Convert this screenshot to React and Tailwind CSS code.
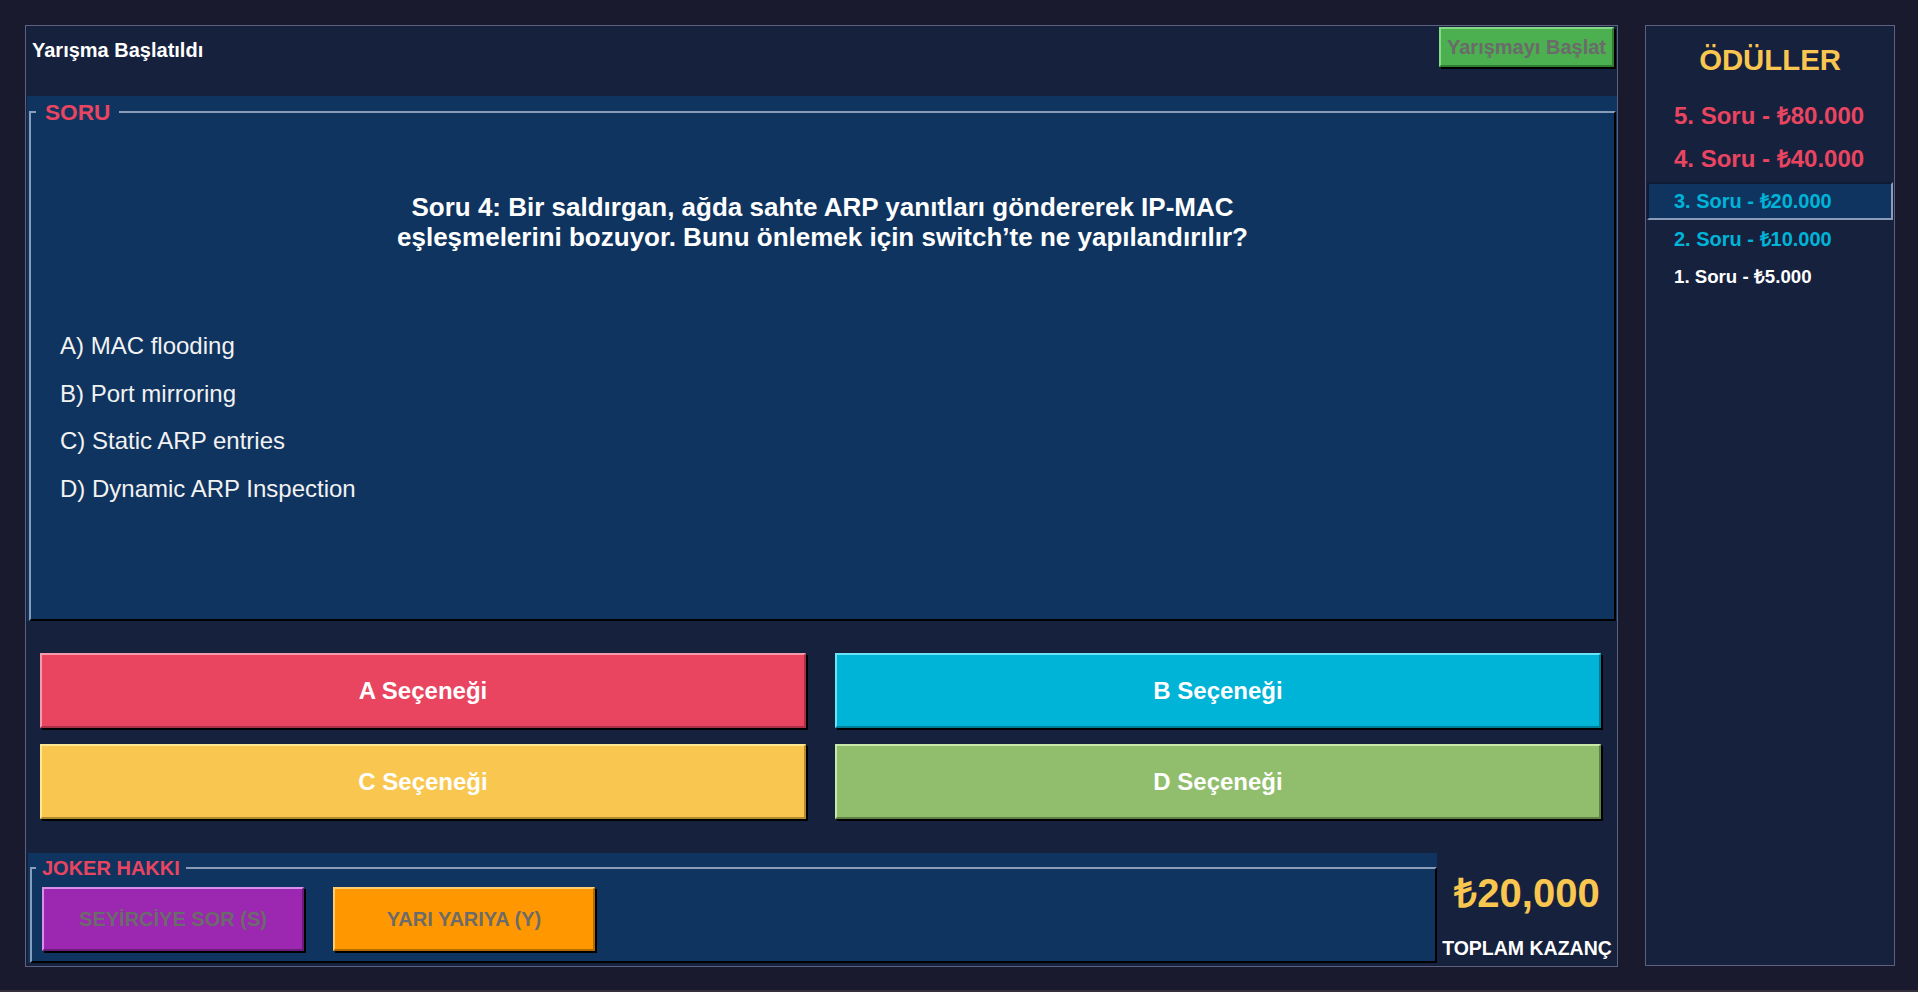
const options = ['A) MAC flooding', 'B) Port mirroring', 'C) Static ARP entries', 'D) Dynamic ARP Inspection'];

const answerButtons = [
  { label: 'A Seçeneği', cls: 'bg-[#e94560] border-t-[#f39aab] border-l-[#f39aab] border-b-[#a8314a] border-r-[#a8314a]' },
  { label: 'B Seçeneği', cls: 'bg-[#00b4d8] border-t-[#6be3f7] border-l-[#6be3f7] border-b-[#007e98] border-r-[#007e98]' },
  { label: 'C Seçeneği', cls: 'bg-[#f9c74f] border-t-[#fde891] border-l-[#fde891] border-b-[#b08a2c] border-r-[#b08a2c]' },
  { label: 'D Seçeneği', cls: 'bg-[#90be6d] border-t-[#c8e8a9] border-l-[#c8e8a9] border-b-[#5f8046] border-r-[#5f8046]' },
];

const App = () => {
  return (
    <div className="flex h-[992px] w-[1918px] gap-[27px] overflow-hidden border-b-2 border-[#34303a] bg-[#1a1a2e] pl-[25px] pt-[25px] font-['Liberation_Sans',Arial,sans-serif]">
      {/* main panel */}
      <div className="flex h-[942px] w-[1593px] flex-col border border-[#5d6180] bg-[#16213e]">
        <div className="flex h-[70px] items-start justify-between">
          <p className="mt-[12px] pl-[6px] text-[20px] font-bold leading-[24px] text-white">Yarışma Başlatıldı</p>
          <button
            type="button"
            className="mr-[3px] mt-[1px] h-[40px] w-[175px] border-2 border-t-[#86d988] border-l-[#86d988] border-b-[#2e7d32] border-r-[#2e7d32] bg-[#4caf50] text-[20px] font-bold text-[#6b6b6b] shadow-[2px_2px_0_#000]"
          >
            Yarışmayı Başlat
          </button>
        </div>

        <div className="ml-[1px] h-[525px] bg-[#0f3460] pt-[15px]">
          <div className="relative ml-[2px] mr-[1px] h-full border-2 border-t-[#8a9cb8] border-l-[#8a9cb8] border-b-black border-r-black">
            <span className="absolute -top-[15px] left-[5px] bg-[#0f3460] px-[9px] text-[22.67px] font-bold leading-[28px] text-[#e94560]">
              SORU
            </span>
            <div className="pt-[79px]">
              <p className="mx-auto w-[900px] text-center text-[26px] font-bold leading-[30px] text-white">
                Soru 4: Bir saldırgan, ağda sahte ARP yanıtları göndererek IP-MAC eşleşmelerini bozuyor. Bunu önlemek için switch’te ne yapılandırılır?
              </p>
            </div>
            <div className="mt-[70px] pl-[29px]">
              {options.map((o) => (
                <p key={o} className="text-[24px] leading-[47.5px] text-[#f2f2f2]">
                  {o}
                </p>
              ))}
            </div>
          </div>
        </div>

        <div className="mt-[32px] grid grid-cols-2 gap-x-[29px] gap-y-[16px] pl-[14px] pr-[16px]">
          {answerButtons.map((b) => (
            <button
              key={b.label}
              type="button"
              className={`h-[75px] w-full border-2 text-[24px] font-bold text-white shadow-[2px_2px_0_#000] ${b.cls}`}
            >
              {b.label}
            </button>
          ))}
        </div>

        <div className="mt-[34px] flex h-[110px]">
          <div className="ml-[2px] h-full w-[1409px] bg-[#0f3460] pt-[14px]">
            <div className="relative ml-[2px] h-full border-2 border-t-[#8a9cb8] border-l-[#8a9cb8] border-b-black border-r-black">
              <span className="absolute -top-[13px] left-[4px] bg-[#0f3460] px-[6px] text-[20px] font-bold leading-[24px] text-[#e94560]">
                JOKER HAKKI
              </span>
              <div className="flex gap-[29px] pl-[10px] pt-[18px]">
                <button
                  type="button"
                  className="h-[64px] w-[262px] border-2 border-t-[#d98ee8] border-l-[#d98ee8] border-b-[#6a1b7a] border-r-[#6a1b7a] bg-[#9c27b0] text-[20px] font-bold text-[#6b6b6b] shadow-[2px_2px_0_#000]"
                >
                  SEYİRCİYE SOR (S)
                </button>
                <button
                  type="button"
                  className="h-[64px] w-[262px] border-2 border-t-[#ffcc70] border-l-[#ffcc70] border-b-[#b36b00] border-r-[#b36b00] bg-[#ff9800] text-[20px] font-bold text-[#6b6b6b] shadow-[2px_2px_0_#000]"
                >
                  YARI YARIYA (Y)
                </button>
              </div>
            </div>
          </div>
          <div className="flex flex-1 flex-col items-center pt-[17px]">
            <p className="text-[40px] font-bold leading-[46px] text-[#f9c74f]">₺20,000</p>
            <p className="mt-[20px] text-[19.5px] font-bold leading-[24px] text-white">TOPLAM KAZANÇ</p>
          </div>
        </div>
      </div>

      {/* prizes */}
      <div className="flex h-[941px] w-[250px] flex-col border border-[#5d6180] bg-[#16213e]">
        <div className="flex h-[68px] items-center justify-center text-[29.33px] font-bold text-[#f9c74f]">ÖDÜLLER</div>
        <div className="flex h-[43px] items-center pl-[28px] text-[24px] font-bold text-[#e94560]">5. Soru - ₺80.000</div>
        <div className="flex h-[43px] items-center pl-[28px] text-[24px] font-bold text-[#e94560]">4. Soru - ₺40.000</div>
        <div className="mx-[1px] mt-[2px] flex h-[38px] items-center border-2 border-t-[#101b33] border-l-[#101b33] border-b-[#8a9cb8] border-r-[#8a9cb8] bg-[#0f3460] pl-[25px] text-[20px] font-bold text-[#00b4d8]">
          3. Soru - ₺20.000
        </div>
        <div className="flex h-[38px] items-center pl-[28px] text-[20px] font-bold text-[#00b4d8]">2. Soru - ₺10.000</div>
        <div className="flex h-[38px] items-center pl-[28px] text-[18.67px] font-bold text-white">1. Soru - ₺5.000</div>
      </div>
    </div>
  );
};

export default App;
